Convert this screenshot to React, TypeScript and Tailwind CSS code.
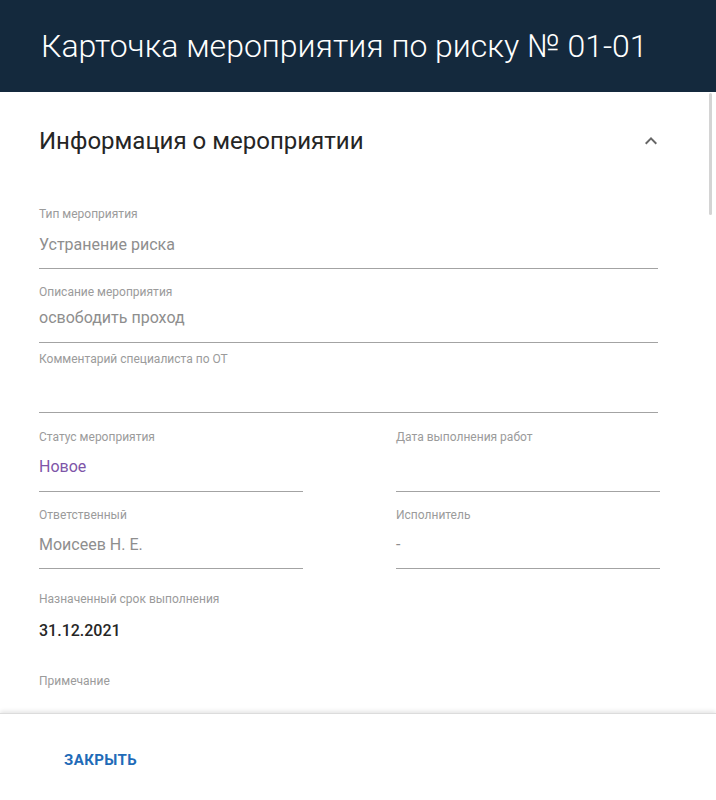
import { ReactNode } from 'react';

const font = { fontFamily: 'Roboto, "Noto Sans", sans-serif' };

function Label({ children, className = '' }: { children: ReactNode; className?: string }) {
  return <div className={`text-[12px] leading-[14px] text-[#9b9b9b] ${className}`}>{children}</div>;
}

function Value({ children, className = '' }: { children: ReactNode; className?: string }) {
  return <div className={`h-[20px] text-[16px] leading-[20px] ${className}`}>{children}</div>;
}

function Line({ className = '' }: { className?: string }) {
  return <div className={`h-px bg-[#a3a3a3] ${className}`} />;
}

export default function App() {
  return (
    <div className="flex h-[800px] w-full flex-col overflow-hidden bg-white" style={font}>
      {/* Header */}
      <header className="flex h-[92px] shrink-0 items-center bg-[#14293d] pl-[41px]">
        <h1 className="text-[32px] font-light leading-[40px] text-white">
          Карточка мероприятия по риску № 01-01
        </h1>
      </header>

      {/* Body */}
      <div className="relative flex-1 overflow-hidden">
        <div className="absolute right-[4px] top-[1px] h-[122px] w-[3px] rounded-full bg-[#d4d4d4]" />

        <div className="pl-[39px] pr-[56px] pt-[33px]">
          <div className="flex items-center justify-between">
            <h2 className="text-[24px] leading-[32px] text-[#252525]">Информация о мероприятии</h2>
            <svg viewBox="0 0 24 24" className="mr-[-3px] h-6 w-6 fill-[#666]">
              <path d="M12 8l-6 6 1.41 1.41L12 10.83l4.59 4.58L18 14z" />
            </svg>
          </div>

          <div className="w-[619px]">
            {/* Тип мероприятия */}
            <Label className="mt-[50px]">Тип мероприятия</Label>
            <Value className="mt-[14px] text-[#8e8e8e]">Устранение риска</Value>
            <Line className="mt-[13px]" />

            {/* Описание */}
            <Label className="mt-[16px]">Описание мероприятия</Label>
            <Value className="mt-[9px] text-[#8e8e8e]">освободить проход</Value>
            <Line className="mt-[14px]" />

            {/* Комментарий */}
            <Label className="mt-[9px]">Комментарий специалиста по ОТ</Label>
            <Line className="mt-[46px]" />
          </div>

          <div className="grid w-[621px] grid-cols-[264px_264px] justify-between">
            <div>
              <Label className="mt-[17px]">Статус мероприятия</Label>
              <Value className="mt-[13px] text-[#7e55a8]">Новое</Value>
              <Line className="mt-[14px]" />
            </div>
            <div>
              <Label className="mt-[17px]">Дата выполнения работ</Label>
              <Value className="mt-[13px]" />
              <Line className="mt-[14px]" />
            </div>
            <div>
              <Label className="mt-[16px]">Ответственный</Label>
              <Value className="mt-[13px] text-[#8e8e8e]">Моисеев Н. Е.</Value>
              <Line className="mt-[13px]" />
            </div>
            <div>
              <Label className="mt-[16px]">Исполнитель</Label>
              <Value className="mt-[13px] text-[#8e8e8e]">-</Value>
              <Line className="mt-[13px]" />
            </div>
          </div>

          <Label className="mt-[23px]">Назначенный срок выполнения</Label>
          <Value className="mt-[15px] font-medium text-[#262626]">31.12.2021</Value>

          <Label className="mt-[33px]">Примечание</Label>
        </div>
      </div>

      {/* Footer */}
      <footer className="relative flex h-[87px] shrink-0 items-center border-t border-[#dcdcdc] bg-white pl-[64px] pt-[5px] shadow-[0_-2px_4px_rgba(0,0,0,0.10)]">
        <button className="text-[15px] font-bold uppercase leading-[20px] tracking-[0.4px] text-[#1f6bb8]">
          Закрыть
        </button>
      </footer>
    </div>
  );
}
